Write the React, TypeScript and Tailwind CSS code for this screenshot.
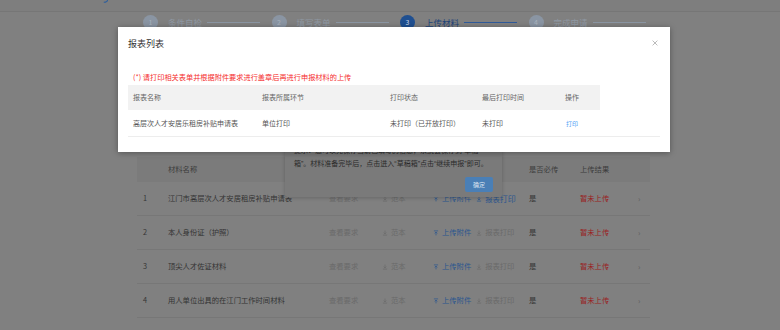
import type { ReactNode } from "react";

const FONT = { fontFamily: '"Noto Sans CJK SC", "Noto Sans", "Liberation Sans", sans-serif' };

const STEPS = [
  { no: 1, label: "条件自检" },
  { no: 2, label: "填写表单" },
  { no: 3, label: "上传材料", active: true },
  { no: 4, label: "完成申请" },
];

const MATERIALS = [
  { no: 1, name: "江门市高层次人才安居租房补贴申请表", printLink: true },
  { no: 2, name: "本人身份证（护照）" },
  { no: 3, name: "顶尖人才佐证材料" },
  { no: 4, name: "用人单位出具的在江门工作时间材料" },
];

const COLS = "grid-cols-[31px_161px_53px_51px_96px_51px_58px_12px]";

function ArrowIcon({ up, className }: { up?: boolean; className: string }) {
  return (
    <svg viewBox="0 0 10 10" className={className} fill="none" stroke="currentColor" strokeWidth="1.2">
      {up ? (
        <>
          <path d="M1.5 1.5h7" />
          <path d="M5 9V3.5M2.8 5.6 5 3.4l2.2 2.2" />
        </>
      ) : (
        <>
          <path d="M1.5 8.5h7" />
          <path d="M5 1v5.5M2.8 4.4 5 6.6l2.2-2.2" />
        </>
      )}
    </svg>
  );
}

function Cell({ children, className = "" }: { children?: ReactNode; className?: string }) {
  return <div className={`flex items-center whitespace-nowrap ${className}`}>{children}</div>;
}

function StepBar() {
  return (
    <div className="mt-[3px] flex h-[15px] items-center pl-[143px]">
      {STEPS.map((s) => (
        <div key={s.no} className="flex w-[128.5px] shrink-0 items-center">
          <div
            className={`flex h-[15px] w-[15px] items-center justify-center rounded-full text-[7px] ${
              s.active ? "bg-[#1f4f90] text-[#c9d6e8]" : "bg-[#8a95a3] text-[#a9b2bd]"
            }`}
          >
            {s.no}
          </div>
          <span
            className={`ml-[10px] text-[8.5px] leading-none ${
              s.active ? "text-[#1f4479]" : "text-[#8f98a3]"
            }`}
          >
            {s.label}
          </span>
          <div className={`ml-[5px] h-px w-[53px] ${s.active ? "bg-[#2f5b9a]" : "bg-[#8b96a3]"}`} />
        </div>
      ))}
    </div>
  );
}

function MaterialTable() {
  // header labels under the tip dialog are covered, so only the visible ones are drawn
  return (
    <div className="ml-[137px] mt-[127px] w-[513px] text-[7.3px]">
      <div className={`grid h-[25px] ${COLS} bg-[#7b7b7b] text-[#3c3c3c]`}>
        <Cell />
        <Cell>材料名称</Cell>
        <Cell />
        <Cell />
        <Cell />
        <Cell>是否必传</Cell>
        <Cell>上传结果</Cell>
        <Cell />
      </div>
      {MATERIALS.map((m) => (
        <div key={m.no} className={`grid h-[34px] ${COLS} border-b border-[#777777] text-[#333333]`}>
          <Cell className="pl-[6px] text-[#363636]">{m.no}</Cell>
          <Cell>{m.name}</Cell>
          <Cell className="text-[#6a6a6a]">查看要求</Cell>
          <Cell className="gap-[3px] text-[#6a6a6a]">
            <ArrowIcon className="h-[6px] w-[6px]" />
            范本
          </Cell>
          <Cell className="gap-[3px]">
            <span className="flex items-center gap-[3px] text-[#2b568f]">
              <ArrowIcon up className="h-[6px] w-[6px]" />
              上传附件
            </span>
            <span className={`ml-[2px] flex items-center gap-[3px] ${m.printLink ? "text-[#2b568f]" : "text-[#6a6a6a]"}`}>
              <ArrowIcon className="h-[6px] w-[6px]" />
              {m.printLink ? (
                <span>
                  报表<span className="text-[8px]">打印</span>
                </span>
              ) : (
                "报表打印"
              )}
            </span>
          </Cell>
          <Cell className="text-[#333333]">是</Cell>
          <Cell className="text-[#9a1e1e]">暂未上传</Cell>
          <Cell className="text-[8px] text-[#5e5e5e]">›</Cell>
        </div>
      ))}
    </div>
  );
}

function TipDialog() {
  return (
    <div className="absolute left-[285px] top-[100px] flex h-[97px] w-[217px] flex-col justify-end rounded-[2px] bg-[#7a7a7a] px-[9px] pb-[5px] shadow-[0_1px_4px_rgba(0,0,0,0.2)]">
      <div className="font-['Liberation_Sans','Noto_Sans_CJK_SC',sans-serif] text-[7px] leading-[13px] text-[#2a2a2a]">
        <p className="whitespace-nowrap">提示：您可以先保存当前已填写的信息，系统会保存到“草稿</p>
        <p className="whitespace-nowrap">箱”。材料准备完毕后，点击进入“草稿箱”点击“继续申报”即可。</p>
      </div>
      <div className="mt-[7px] flex justify-end">
        <button className="h-[15px] w-[28px] rounded-[2px] bg-[#4a7fb6] text-[6px] text-[#d8e3ef]">确定</button>
      </div>
    </div>
  );
}

function ReportDialog() {
  return (
    <div className="absolute left-[118px] top-[27px] h-[125px] w-[552px] bg-white shadow-[0_1px_6px_rgba(0,0,0,0.35)]">
      <div className="flex h-[32px] items-center justify-between pl-[10px] pr-[12px]">
        <h2 className="text-[9px] leading-none text-[#333333]">报表列表</h2>
        <svg viewBox="0 0 10 10" className="h-[6px] w-[6px]" stroke="#a0a0a0" strokeWidth="1.2">
          <path d="M1 1l8 8M9 1 1 9" />
        </svg>
      </div>
      <p className="ml-[15px] mt-[13px] text-[7.2px] leading-[10px] text-[#f52c2c]">
        (*) 请打印相关表单并根据附件要求进行盖章后再进行申报材料的上传
      </p>
      <div className="ml-[10px] mt-[3px] w-[532px] text-[7px]">
        <div className="grid h-[25px] w-[472px] grid-cols-[129px_128px_92px_83px_40px] bg-[#f2f2f2] text-[#666666]">
          <Cell className="pl-[5px]">报表名称</Cell>
          <Cell className="pl-[5px]">报表所属环节</Cell>
          <Cell className="pl-[5px]">打印状态</Cell>
          <Cell className="pl-[5px]">最后打印时间</Cell>
          <Cell className="pl-[5px]">操作</Cell>
        </div>
        <div className="border-b border-[#ededed]">
          <div className="grid h-[26px] w-[472px] grid-cols-[129px_128px_92px_83px_40px] text-[#555555]">
            <Cell className="pl-[5px]">高层次人才安居乐租房补贴申请表</Cell>
            <Cell className="pl-[5px]">单位打印</Cell>
            <Cell className="pl-[5px]">未打印（已开放打印）</Cell>
            <Cell className="pl-[5px]">未打印</Cell>
            <Cell className="pl-[6px] text-[6px] text-[#4ea1f5]">打印</Cell>
          </div>
        </div>
      </div>
    </div>
  );
}

export default function App() {
  return (
    <div className="relative h-[330px] w-[780px] overflow-hidden bg-[#808080]" style={FONT}>
      <div className="h-[12px] border-b border-[#767676] bg-[#7e7e7e] pl-[103px]">
        <svg viewBox="0 0 8 4" className="h-[3px] w-[6px]" fill="none" stroke="#2f5f9c" strokeWidth="1.5">
          <path d="M6 0 C6 2 4 3 1 3" />
        </svg>
      </div>
      <StepBar />
      <MaterialTable />
      <TipDialog />
      <ReportDialog />
    </div>
  );
}
